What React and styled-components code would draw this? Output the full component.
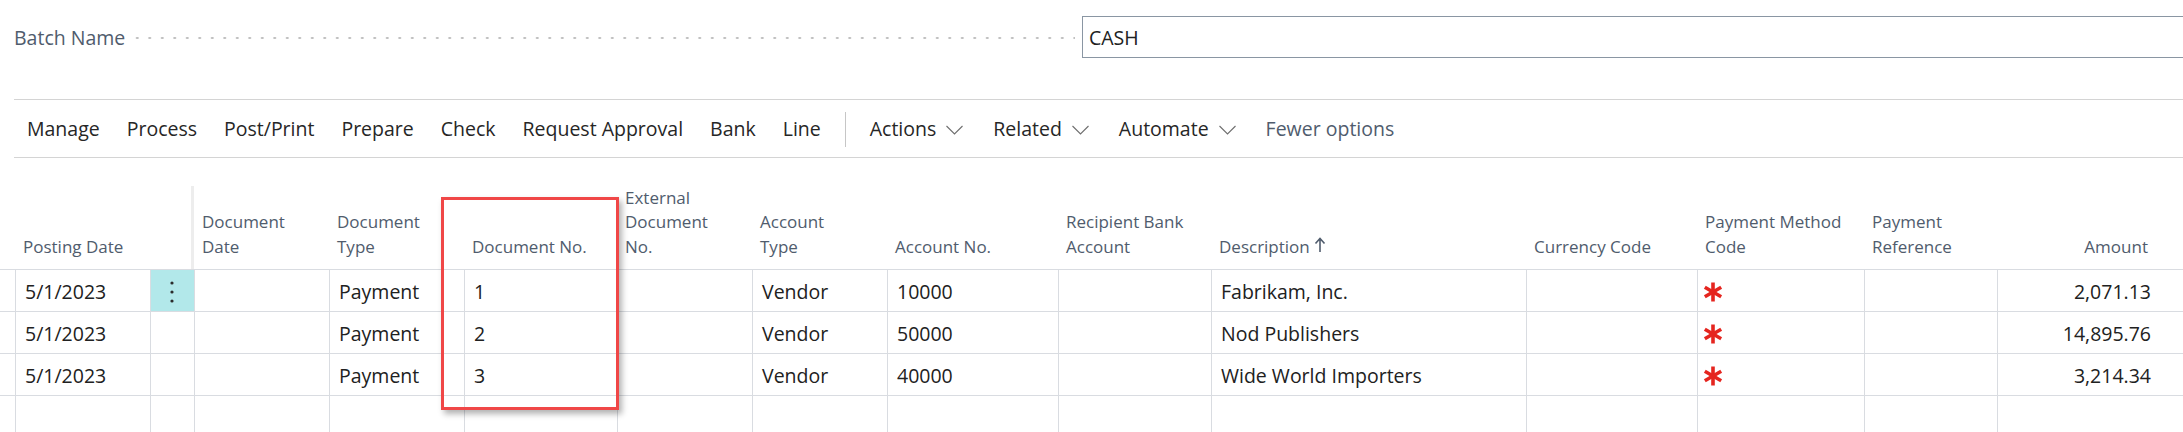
import React from 'react';
import styled, { createGlobalStyle } from 'styled-components';

const GlobalStyle = createGlobalStyle`
  html, body {
    margin: 0;
    padding: 0;
    overflow: hidden;
    background: #ffffff;
  }
  * {
    box-sizing: border-box;
  }
`;

const Page = styled.div`
  position: relative;
  width: 2183px;
  height: 432px;
  overflow: hidden;
  font-family: "Segoe UI", "Open Sans", "Noto Sans", sans-serif;
  color: #212121;
`;

const BatchRow = styled.div`
  display: grid;
  grid-template-columns: 1068px 1150px;
  align-items: center;
  padding: 16px 0 0 14px;
  height: 99px;
  align-content: start;
`;

const FieldLabel = styled.div`
  display: flex;
  align-items: center;
  height: 42px;
  padding-right: 7px;
`;

const LabelText = styled.span`
  font-size: 19.5px;
  color: #505c6d;
  white-space: nowrap;
  padding-right: 6px;
`;

const Leader = styled.span`
  flex: 1;
  height: 4px;
  margin-top: 2px;
  background-image: radial-gradient(circle, #bdbdbd 1px, transparent 1.4px);
  background-size: 12.5px 4px;
  background-repeat: repeat-x;
  background-position: 0 center;
`;

const TextInput = styled.div`
  height: 42px;
  border: 1px solid #8a96a3;
  padding: 0 0 0 6px;
  display: flex;
  align-items: center;
  font-size: 19.5px;
  color: #212121;
`;

const Toolbar = styled.div`
  display: flex;
  align-items: center;
  gap: 27px;
  margin-left: 14px;
  padding-left: 13px;
  height: 59px;
  border-top: 1px solid #d4d4d4;
  border-bottom: 1px solid #d4d4d4;
`;

const ToolButton = styled.span`
  display: inline-flex;
  align-items: center;
  font-size: 19.5px;
  white-space: nowrap;
  color: ${(p) => (p.$muted ? '#505c6d' : '#262626')};
`;

const Chevron = styled.svg`
  width: 20px;
  height: 10px;
  margin-left: 10px;
  margin-top: 3px;
`;

const Divider = styled.span`
  width: 1px;
  height: 35px;
  background: #c6c6c6;
  margin: 1px -3px 0 -3px;
`;

const Grid = styled.div`
  display: grid;
  grid-template-columns: ${(p) => p.$cols};
`;

const HeadCell = styled.div`
  height: 112px;
  display: flex;
  flex-direction: column;
  justify-content: flex-end;
  align-items: ${(p) => (p.$right ? 'flex-end' : 'flex-start')};
  padding: 0 ${(p) => (p.$right ? '35px' : '8px')} 10px 8px;
  border-bottom: 1px solid #d9dce1;
  font-size: 17px;
  line-height: 24.5px;
  color: #505c6d;
`;

const HeadLine = styled.span`
  display: flex;
  align-items: center;
  white-space: nowrap;
`;

const FrozenEdge = styled.div`
  height: 112px;
  border-bottom: 1px solid #d9dce1;
  display: flex;
  justify-content: flex-end;
  align-items: flex-end;
`;

const EdgeLine = styled.span`
  width: 3px;
  height: 83px;
  background: #ededed;
`;

const Cell = styled.div`
  height: 42px;
  display: flex;
  align-items: center;
  justify-content: ${(p) => (p.$right ? 'flex-end' : 'flex-start')};
  padding: 2px ${(p) => (p.$right ? '32px' : '9px')} 0 ${(p) => p.$pad ?? 9}px;
  border-bottom: 1px solid #d9dce1;
  border-left: ${(p) => (p.$noLeft ? 'none' : '1px solid #d9dce1')};
  background: ${(p) => (p.$active ? '#b2e8ea' : 'transparent')};
  font-size: 19.5px;
  color: #212121;
  white-space: nowrap;
`;

const Callout = styled.div`
  position: absolute;
  left: 441px;
  top: 197px;
  width: 178px;
  height: 213px;
  border: 3px solid #f04747;
  box-shadow: 3px 4px 6px rgba(0, 0, 0, 0.3);
  pointer-events: none;
`;

const columns = [
  { key: 'gutter', w: '15px' },
  { key: 'postingDate', w: '135px', label: ['Posting Date'] },
  { key: 'menu', w: '44px' },
  { key: 'docDate', w: '135px', label: ['Document', 'Date'] },
  { key: 'docType', w: '135px', label: ['Document', 'Type'] },
  { key: 'docNo', w: '153px', label: ['Document No.'] },
  { key: 'extDocNo', w: '135px', label: ['External', 'Document', 'No.'] },
  { key: 'accType', w: '135px', label: ['Account', 'Type'] },
  { key: 'accNo', w: '171px', label: ['Account No.'] },
  { key: 'bank', w: '153px', label: ['Recipient Bank', 'Account'] },
  { key: 'desc', w: '315px', label: ['Description'], sorted: true },
  { key: 'currency', w: '171px', label: ['Currency Code'] },
  { key: 'method', w: '167px', label: ['Payment Method', 'Code'] },
  { key: 'ref', w: '133px', label: ['Payment', 'Reference'] },
  { key: 'amount', w: '1fr', label: ['Amount'], right: true },
];

const lines = [
  { postingDate: '5/1/2023', docType: 'Payment', docNo: '1', accType: 'Vendor', accNo: '10000', desc: 'Fabrikam, Inc.', method: '*', amount: '2,071.13' },
  { postingDate: '5/1/2023', docType: 'Payment', docNo: '2', accType: 'Vendor', accNo: '50000', desc: 'Nod Publishers', method: '*', amount: '14,895.76' },
  { postingDate: '5/1/2023', docType: 'Payment', docNo: '3', accType: 'Vendor', accNo: '40000', desc: 'Wide World Importers', method: '*', amount: '3,214.34' },
  {},
];

const toolItems = ['Manage', 'Process', 'Post/Print', 'Prepare', 'Check', 'Request Approval', 'Bank', 'Line'];
const menuItems = ['Actions', 'Related', 'Automate'];

function ChevronDown() {
  return (
    <Chevron viewBox="0 0 20 10">
      <path d="M0.5 1 L8.5 9 L16.5 1" fill="none" stroke="#6e6e6e" strokeWidth="1.1" />
    </Chevron>
  );
}

function SortArrow() {
  return (
    <svg width="12" height="16" viewBox="0 0 12 16" style={{ marginLeft: 4, marginTop: -4 }}>
      <path d="M6 15 V2 M1.5 6.5 L6 1.5 L10.5 6.5" fill="none" stroke="#505c6d" strokeWidth="1.6" />
    </svg>
  );
}

function Required() {
  return (
    <svg width="20" height="20" viewBox="0 0 20 20">
      <g stroke="#e5251f" strokeWidth="3.6" strokeLinecap="butt">
        <path d="M10 0.5 V19.5" />
        <path d="M1.8 5.3 L18.2 14.7" />
        <path d="M1.8 14.7 L18.2 5.3" />
      </g>
    </svg>
  );
}

function RowMenu() {
  return (
    <svg width="6" height="24" viewBox="0 0 6 24">
      <circle cx="3" cy="3" r="1.6" fill="#2b2b2b" />
      <circle cx="3" cy="12" r="1.6" fill="#2b2b2b" />
      <circle cx="3" cy="21" r="1.6" fill="#2b2b2b" />
    </svg>
  );
}

function HeaderRow() {
  return columns.map((col) => {
    if (col.key === 'gutter') return <HeadCell key={col.key} />;
    if (col.key === 'menu') {
      return (
        <FrozenEdge key={col.key}>
          <EdgeLine />
        </FrozenEdge>
      );
    }
    return (
      <HeadCell key={col.key} $right={col.right}>
        {col.label.map((text, i) => (
          <HeadLine key={i}>
            {text}
            {col.sorted && <SortArrow />}
          </HeadLine>
        ))}
      </HeadCell>
    );
  });
}

function BodyRow({ line, index }) {
  return columns.map((col) => {
    const key = `${index}-${col.key}`;
    if (col.key === 'gutter') return <Cell key={key} $noLeft />;
    if (col.key === 'menu') {
      const active = index === 0;
      return (
        <Cell key={key} $active={active} $pad={18}>
          {active && <RowMenu />}
        </Cell>
      );
    }
    if (col.key === 'method' && line.method) {
      return (
        <Cell key={key} $pad={5}>
          <Required />
        </Cell>
      );
    }
    return (
      <Cell key={key} $right={col.right}>
        {line[col.key]}
      </Cell>
    );
  });
}

export default function App() {
  const cols = columns.map((c) => c.w).join(' ');
  return (
    <Page>
      <GlobalStyle />
      <BatchRow>
        <FieldLabel>
          <LabelText>Batch Name</LabelText>
          <Leader />
        </FieldLabel>
        <TextInput>CASH</TextInput>
      </BatchRow>

      <Toolbar>
        {toolItems.map((item) => (
          <ToolButton key={item}>{item}</ToolButton>
        ))}
        <Divider />
        {menuItems.map((item) => (
          <ToolButton key={item}>
            {item}
            <ChevronDown />
          </ToolButton>
        ))}
        <ToolButton $muted>Fewer options</ToolButton>
      </Toolbar>

      <Grid $cols={cols}>
        <HeaderRow />
        {lines.map((line, i) => (
          <BodyRow key={i} line={line} index={i} />
        ))}
      </Grid>

      <Callout />
    </Page>
  );
}
